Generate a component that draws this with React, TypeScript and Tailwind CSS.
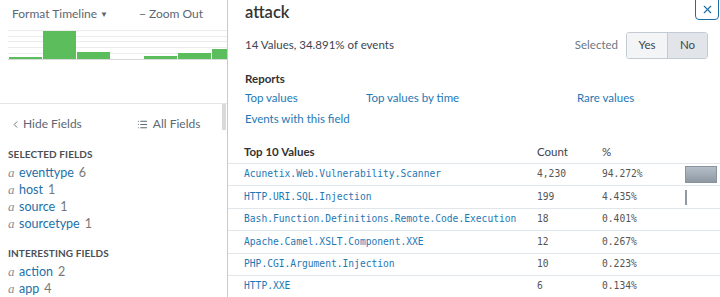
import React from 'react';
import { ChevronLeft, List, X } from 'lucide-react';

const sans = "font-['Lato','Open_Sans',sans-serif]";
const mono = "font-['DejaVu_Sans_Mono','Liberation_Mono',monospace]";

const selectedFields = [
  { name: 'eventtype', count: 6 },
  { name: 'host', count: 1 },
  { name: 'source', count: 1 },
  { name: 'sourcetype', count: 1 },
];

const interestingFields = [
  { name: 'action', count: 2 },
  { name: 'app', count: 4 },
];

const topValues = [
  { value: 'Acunetix.Web.Vulnerability.Scanner', count: '4,230', pct: '94.272%', bar: 'full' },
  { value: 'HTTP.URI.SQL.Injection', count: '199', pct: '4.435%', bar: 'tick' },
  { value: 'Bash.Function.Definitions.Remote.Code.Execution', count: '18', pct: '0.401%', bar: '' },
  { value: 'Apache.Camel.XSLT.Component.XXE', count: '12', pct: '0.267%', bar: '' },
  { value: 'PHP.CGI.Argument.Injection', count: '10', pct: '0.223%', bar: '' },
  { value: 'HTTP.XXE', count: '6', pct: '0.134%', bar: '' },
];

function Timeline() {
  const bars = [
    { x: 1, y: 27, h: 2 },
    { x: 35, y: 1, h: 28 },
    { x: 69, y: 22, h: 7 },
    { x: 136, y: 26, h: 3 },
    { x: 170, y: 23, h: 6 },
    { x: 204, y: 19, h: 10 },
  ];
  return (
    <svg width="219" height="31" className="ml-[8px]">
      {[0, 6, 11, 17, 23].map((y) => (
        <line key={y} x1="0" x2="219" y1={y + 0.5} y2={y + 0.5} stroke="#ececec" />
      ))}
      <line x1="0" x2="219" y1="29.5" y2="29.5" stroke="#d9d9d9" />
      {bars.map((b) => (
        <rect key={b.x} x={b.x} y={b.y} width="33" height={b.h} fill="#5cbd5c" />
      ))}
    </svg>
  );
}

function FieldItem({ name, count }: { name: string; count: number }) {
  return (
    <div className="flex items-center h-[17px] leading-[17px] pl-[8px]">
      <span className="font-['Liberation_Serif',serif] italic text-[13px] text-[#8a8f96] w-[11px]">a</span>
      <span className="text-[12.5px] text-[#1e6fa8]">{name}</span>
      <span className="text-[12.5px] text-[#777] ml-[5px]">{count}</span>
    </div>
  );
}

function LeftSide() {
  return (
    <div className="w-[227px] shrink-0 flex flex-col">
      <div className="h-[110px] border-b border-[#e4e4e4]">
        <div className="flex items-center h-[27px] text-[12px] text-[#5c6773]">
          <span className="ml-[12px]">Format Timeline</span>
          <span className="ml-[3px] text-[8px]">▼</span>
          <span className="ml-[31px]">− Zoom Out</span>
        </div>
        <div className="mt-[3px]">
          <Timeline />
        </div>
      </div>
      <div className="flex flex-1">
        <div className="flex-1">
          <div className="flex items-center h-[20px] mt-[10px] text-[12px] text-[#5c6773]">
            <ChevronLeft size={11} strokeWidth={2} className="ml-[10px]" />
            <span className="ml-[2px]">Hide Fields</span>
            <List size={11} strokeWidth={2.2} className="ml-[55px]" />
            <span className="ml-[5px]">All Fields</span>
          </div>
          <div className="mt-[13px] h-[14px] leading-[14px] pl-[8px] text-[10px] font-bold text-[#4a4f55] tracking-[0.1px]">
            SELECTED FIELDS
          </div>
          <div className="mt-[2.5px]">
            {selectedFields.map((f) => (
              <FieldItem key={f.name} {...f} />
            ))}
          </div>
          <div className="mt-[14.5px] h-[14px] leading-[14px] pl-[8px] text-[10px] font-bold text-[#4a4f55] tracking-[0.1px]">
            INTERESTING FIELDS
          </div>
          <div className="mt-[3px]">
            {interestingFields.map((f) => (
              <FieldItem key={f.name} {...f} />
            ))}
          </div>
        </div>
        <div className="w-[4px] mr-[1px]">
          <div className="h-[26px] bg-[#d8dadd]" />
        </div>
      </div>
    </div>
  );
}

function FieldPanel() {
  return (
    <div className="flex-1 relative border-l border-[#c3cbd4] bg-white">
      <div className="absolute right-[1px] top-[-5px] w-[24px] h-[25px] border-[1.5px] border-[#1a6fa8] rounded-[4px] flex items-center justify-center pt-[4px] bg-white">
        <X size={13} strokeWidth={2} className="text-[#1a6fa8]" />
      </div>
      <div className="px-[17px]">
        <div className="h-[24px] leading-[24px] text-[16.5px] font-semibold text-[#333]">attack</div>
        <div className="flex items-center h-[26px] mt-[8px]">
          <span className="text-[11.5px] text-[#3c444d]">14 Values, 34.891% of events</span>
          <span className="ml-auto text-[11.5px] text-[#6b7785]">Selected</span>
          <div className="flex ml-[8px] mr-[-5px] h-[27px] border border-[#c3cbd4] rounded-[3px] overflow-hidden text-[11.5px] text-[#3c444d]">
            <div className="w-[41px] bg-[#f2f4f5] flex items-center justify-center border-r border-[#c3cbd4]">Yes</div>
            <div className="w-[39px] bg-[#e1e4e8] flex items-center justify-center">No</div>
          </div>
        </div>
        <div className="mt-[13px] h-[16px] leading-[16px] text-[11.5px] font-bold text-[#333]">Reports</div>
        <div className="mt-[3px] h-[16px] leading-[16px] flex text-[11.5px] text-[#1e78b4]">
          <span className="w-[121px]">Top values</span>
          <span className="w-[211px]">Top values by time</span>
          <span>Rare values</span>
        </div>
        <div className="mt-[5px] h-[16px] leading-[16px] text-[11.5px] text-[#1e78b4]">Events with this field</div>
      </div>
      <div className="mt-[15px]">
        <div className="flex items-center h-[22px] pb-[2px] border-b border-[#e1e6eb] text-[11.5px]">
          <span className="pl-[16px] w-[309px] font-bold text-[#333]">Top 10 Values</span>
          <span className="w-[65px] text-[#3c444d]">Count</span>
          <span className="text-[#3c444d]">%</span>
        </div>
        {topValues.map((r) => (
          <div key={r.value} className={`flex items-center h-[22.4px] border-b border-[#e1e6eb] ${mono} text-[9.65px]`}>
            <span className="pl-[16px] w-[309px] text-[#1e78b4] whitespace-nowrap">{r.value}</span>
            <span className="w-[65px] text-[#555]">{r.count}</span>
            <span className="w-[83px] text-[#555]">{r.pct}</span>
            {r.bar === 'full' && (
              <div className="w-[32px] h-[17px] border border-[#8a949e] bg-gradient-to-b from-[#b4bec8] to-[#8f99a3]" />
            )}
            {r.bar === 'tick' && <div className="w-[2px] h-[15px] bg-[#8f99a3]" />}
          </div>
        ))}
      </div>
    </div>
  );
}

export default function App() {
  return (
    <div className={`w-[720px] h-[297px] overflow-hidden flex bg-white ${sans}`}>
      <LeftSide />
      <FieldPanel />
    </div>
  );
}
